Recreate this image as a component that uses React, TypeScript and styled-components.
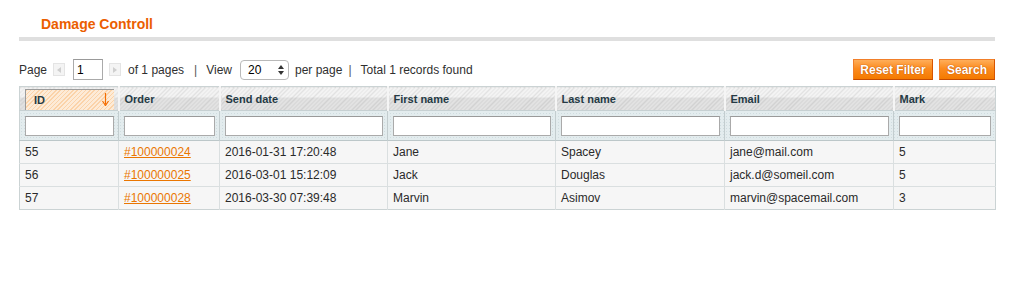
import React from "react";
import styled, { createGlobalStyle } from "styled-components";

const Global = createGlobalStyle`
  html, body { margin: 0; padding: 0; background: #fff; }
  body { font-family: "Liberation Sans", Arial, Helvetica, sans-serif; font-size: 12px; color: #2f2f2f; }
`;

const Page = styled.div`
  padding: 0 22px 0 19px;
`;

const HeaderBar = styled.div`
  height: 37px;
  border-bottom: 4px solid #dfdfdf;
  box-sizing: content-box;
  display: flex;
  align-items: flex-start;
`;

const Title = styled.h3`
  margin: 0;
  padding: 16px 0 0 22px;
  font: bold 14px/16px "Liberation Sans", Arial, sans-serif;
  color: #eb5e00;
`;

const Toolbar = styled.div`
  display: flex;
  align-items: center;
  justify-content: space-between;
  margin-top: 18px;
  height: 21px;
`;

const Pager = styled.div`
  display: flex;
  align-items: center;
  font-size: 12px;
  color: #2f2f2f;
  line-height: 14px;
`;

const ArrowBox = styled.span<{ $r: number; $l: number }>`
  display: inline-flex;
  align-items: center;
  justify-content: center;
  width: 12px;
  height: 13px;
  border: 1px solid #e4e4e4;
  background: #f4f4f4;
  box-sizing: border-box;
  margin: 0 ${(p) => p.$r}px 0 ${(p) => p.$l}px;
`;

const PageInput = styled.input`
  width: 30px;
  height: 21px;
  box-sizing: border-box;
  border: 1px solid #aaa;
  border-top-color: #999;
  padding: 0 3px;
  font: 12px "Liberation Sans", Arial, sans-serif;
  color: #000;
`;

const Sep = styled.span<{ $l: number; $r: number }>`
  margin: 0 ${(p) => p.$r}px 0 ${(p) => p.$l}px;
  color: #555;
`;

const SelectBox = styled.span`
  display: inline-flex;
  align-items: center;
  justify-content: space-between;
  width: 49px;
  height: 20px;
  box-sizing: border-box;
  border: 1px solid #b9b9b9;
  border-radius: 4px;
  padding: 0 4px 0 7px;
  margin: 0 6px 0 8px;
  font-size: 12px;
  color: #000;
  background: #fff;
`;

const Buttons = styled.div`
  display: flex;
  gap: 6px;
`;

const Button = styled.button<{ $w: number }>`
  width: ${(p) => p.$w}px;
  height: 21px;
  box-sizing: border-box;
  border: 1px solid #ed6502;
  border-color: #f17f2a #d85400 #c64b00 #f17f2a;
  background: linear-gradient(to bottom, #ffae5a 0%, #fb8b1f 45%, #f47a00 100%);
  color: #fff;
  font: bold 12px "Liberation Sans", Arial, sans-serif;
  text-shadow: 0 0 1px #c25200, 0 0 1px #c25200;
  padding: 0;
  cursor: pointer;
`;

const Table = styled.table`
  margin-top: 6px;
  width: 976px;
  border-collapse: collapse;
  table-layout: fixed;
  border: 1px solid #cbd3d4;
`;

const HeadCell = styled.th`
  height: 23px;
  padding: 0;
  text-align: left;
  font: bold 11px "Liberation Sans", Arial, sans-serif;
  color: #253a45;
  border-left: 2px solid #f5f5f5;
  background:
    linear-gradient(to bottom, rgba(0, 0, 0, 0) 45%, rgba(0, 0, 0, 0.07) 45%),
    repeating-linear-gradient(135deg, #e2e2e2 0 1px, #f3f3f3 1px 3px);
  &:first-child { border-left: none; }
`;

const HeadInner = styled.div<{ $sorted?: boolean }>`
  height: 22px;
  display: flex;
  align-items: center;
  justify-content: space-between;
  padding: 0 5px;
  box-sizing: border-box;
  ${(p) =>
    p.$sorted
      ? `
    margin: 1px 4px 0 5px;
    height: 21px;
    padding: 0 5px 0 8px;
    border-top: 1px solid #9c9c9c;
    border-left: 1px solid #9c9c9c;
    background: repeating-linear-gradient(135deg, #fbd3a9 0 1px, #fdebd7 1px 3px);
  `
      : ""}
`;

const FilterRow = styled.tr`
  background:
    radial-gradient(circle, #cfdcdf 0.6px, transparent 0.8px) 0 0 / 3px 3px,
    #e3ecee;
  border-top: 1px solid #c6d0d2;
  border-bottom: 1px solid #bcc7c9;
`;

const FilterCell = styled.td`
  height: 29px;
  padding: 0 4px 0 5px;
  border-left: 1px solid #c3cdcf;
  &:first-child { border-left: none; }
`;

const FilterInput = styled.input`
  display: block;
  width: 100%;
  height: 20px;
  box-sizing: border-box;
  border: 1px solid #aaa;
  border-top-color: #9a9a9a;
  background: #fff;
`;

const Row = styled.tr`
  background: #f6f6f6;
  border-top: 1px solid #dadfe0;
`;

const Cell = styled.td`
  height: 22px;
  padding: 0 4px 0 5px;
  font: 12px "Liberation Sans", Arial, sans-serif;
  color: #2a2a2a;
  border-left: 1px solid #dadfe0;
  white-space: nowrap;
  &:first-child { border-left: none; }
`;

const OrderLink = styled.a`
  color: #ea7601;
  text-decoration: underline;
`;

const cols = [
  { name: "ID", w: 99 },
  { name: "Order", w: 101 },
  { name: "Send date", w: 168 },
  { name: "First name", w: 168 },
  { name: "Last name", w: 169 },
  { name: "Email", w: 169 },
  { name: "Mark", w: 102 },
];

const rows = [
  ["55", "#100000024", "2016-01-31 17:20:48", "Jane", "Spacey", "jane@mail.com", "5"],
  ["56", "#100000025", "2016-03-01 15:12:09", "Jack", "Douglas", "jack.d@someil.com", "5"],
  ["57", "#100000028", "2016-03-30 07:39:48", "Marvin", "Asimov", "marvin@spacemail.com", "3"],
];

const Tri = ({ dir }: { dir: "l" | "r" }) => (
  <svg width="4" height="6" viewBox="0 0 4 6">
    {dir === "l" ? <path d="M4 0 L0 3 L4 6 Z" fill="#cfcfcf" /> : <path d="M0 0 L4 3 L0 6 Z" fill="#cfcfcf" />}
  </svg>
);

const SortArrow = () => (
  <svg width="7" height="13" viewBox="0 0 7 13">
    <path d="M3.5 0 V11" stroke="#f46d00" strokeWidth="1.2" />
    <path d="M0.5 8 L3.5 12.5 L6.5 8" fill="none" stroke="#f46d00" strokeWidth="1.2" />
  </svg>
);

export default function App() {
  return (
    <>
      <Global />
      <Page>
        <HeaderBar>
          <Title>Damage Controll</Title>
        </HeaderBar>
        <Toolbar>
          <Pager>
            <span>Page</span>
            <ArrowBox $l={6} $r={8}>
              <Tri dir="l" />
            </ArrowBox>
            <PageInput defaultValue="1" />
            <ArrowBox $l={6} $r={7}>
              <Tri dir="r" />
            </ArrowBox>
            <span>of 1 pages</span>
            <Sep $l={10} $r={9}>|</Sep>
            <span>View</span>
            <SelectBox>
              <span>20</span>
              <svg width="6" height="10" viewBox="0 0 6 10">
                <path d="M0 4 L3 0 L6 4 Z M0 6 L3 10 L6 6 Z" fill="#333" />
              </svg>
            </SelectBox>
            <span>per page</span>
            <Sep $l={6} $r={9}>|</Sep>
            <span>Total 1 records found</span>
          </Pager>
          <Buttons>
            <Button $w={80}>Reset Filter</Button>
            <Button $w={56}>Search</Button>
          </Buttons>
        </Toolbar>
        <Table>
          <colgroup>
            {cols.map((c) => (
              <col key={c.name} style={{ width: c.w }} />
            ))}
          </colgroup>
          <thead>
            <tr>
              {cols.map((c, i) => (
                <HeadCell key={c.name}>
                  <HeadInner $sorted={i === 0}>
                    <span>{c.name}</span>
                    {i === 0 && <SortArrow />}
                  </HeadInner>
                </HeadCell>
              ))}
            </tr>
            <FilterRow>
              {cols.map((c) => (
                <FilterCell key={c.name}>
                  <FilterInput />
                </FilterCell>
              ))}
            </FilterRow>
          </thead>
          <tbody>
            {rows.map((r) => (
              <Row key={r[0]}>
                {r.map((v, i) => (
                  <Cell key={i}>{i === 1 ? <OrderLink href="#">{v}</OrderLink> : v}</Cell>
                ))}
              </Row>
            ))}
          </tbody>
        </Table>
      </Page>
    </>
  );
}
